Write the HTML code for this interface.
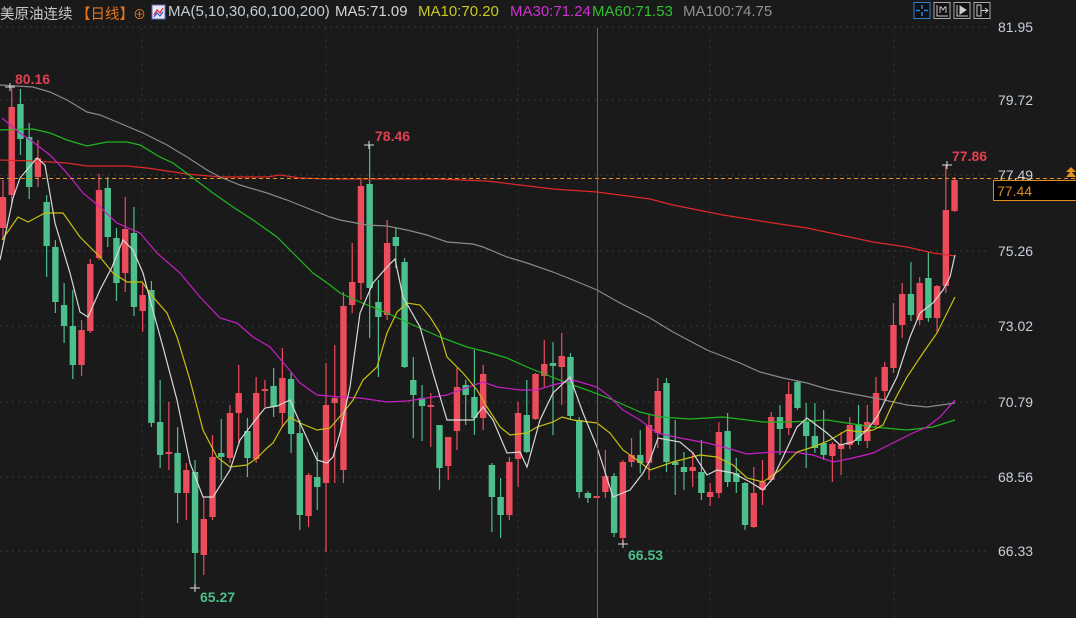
<!DOCTYPE html>
<html><head><meta charset="utf-8"><style>
html,body{margin:0;padding:0;background:#1a1a1a;width:1076px;height:618px;overflow:hidden}
#hd{position:absolute;left:0;top:3px;height:20px;font:15px "Liberation Sans","Noto Sans CJK SC",sans-serif;white-space:nowrap}
#hd span{position:absolute;top:0}
svg{position:absolute;left:0;top:0}
</style></head><body>
<svg id="s" width="1076" height="618" xmlns="http://www.w3.org/2000/svg"></svg>
<div id="hd">
<span style="left:0;color:#c8c8c8;font-size:14.5px">美原油连续</span>
<span style="left:76px;color:#e8741c;font-size:14.5px">【日线】</span>
<span style="left:133px;color:#e8741c;font-size:13px;top:1px">⊕</span>
<span style="left:168px;color:#c4ccd6">MA(5,10,30,60,100,200)</span>
<span style="left:335px;color:#d4d4d4">MA5:71.09</span>
<span style="left:418px;color:#c8c820">MA10:70.20</span>
<span style="left:510px;color:#d030d0">MA30:71.24</span>
<span style="left:592px;color:#30c030">MA60:71.53</span>
<span style="left:683px;color:#909090">MA100:74.75</span>
</div>
<script>
const S=document.getElementById('s');let h='';
[27,100,175,251,326,402,477,551].forEach(y=>{h+=`<line x1="0" y1="${y}" x2="990" y2="${y}" stroke="#3a3a3a" stroke-dasharray="2,4"/>`});
[142,326,518,710,894].forEach(x=>{h+=`<line x1="${x}" y1="28" x2="${x}" y2="618" stroke="#333" stroke-dasharray="2,4"/>`});
h+=`<rect x="152" y="5" width="13" height="14" fill="#e8e8f8" stroke="#6070c0"/><polyline points="154,15 157,10 160,13 163,8" fill="none" stroke="#e03030" stroke-width="1.3"/><polyline points="154,17 157,13 160,16 163,12" fill="none" stroke="#3050e0" stroke-width="1.2"/>`;
[[914,'#2a7fd0'],[934,'#aaa'],[954,'#aaa'],[974,'#aaa']].forEach(([x,c],i)=>{h+=`<rect x="${x}" y="2.5" width="16" height="16" fill="#111" stroke="${c}"/>`});
h+=`<g stroke="#2a8ae0" stroke-width="1.5"><line x1="922" y1="5" x2="922" y2="9"/><line x1="922" y1="12" x2="922" y2="16"/><line x1="916" y1="10.5" x2="920" y2="10.5"/><line x1="924" y1="10.5" x2="928" y2="10.5"/></g>`;
h+=`<g stroke="#ccc" fill="none" stroke-width="1"><polyline points="937,5 937,16 948,16"/><path d="M940,13V7h1l2,3 2,-3h1v6"/><polyline points="957,5 957,16 968,16"/><path d="M960,6v8l6,-4z" fill="#ccc"/><rect x="977" y="5" width="4" height="11"/><path d="M981,10.5h7M985,8l3,2.5-3,2.5" /></g>`;
const C=[[197,228,180,240,1],[107,195,87,203,1],[104,139,89,155,0],[137,187,123,199,0],[158,177,140,187,1],[202,246,195,277,0],[247,302,240,313,0],[305,326,283,343,0],[326,365,290,379,0],[330,365,320,376,1],[264,331,259,333,1],[190,258,174,260,1],[188,237,177,247,0],[238,283,228,301,0],[229,273,197,292,1],[233,307,207,316,0],[295,311,283,332,1],[290,423,281,427,0],[422,455,380,468,0],[452,454,402,470,1],[453,493,427,523,0],[470,493,463,520,1],[472,553,460,588,0],[519,555,497,575,1],[457,517,435,520,1],[453,457,419,480,0],[413,458,405,463,1],[393,413,365,443,1],[431,458,418,477,0],[393,459,377,463,1],[389,391,380,407,1],[386,407,368,417,0],[378,413,348,427,1],[379,434,372,453,0],[433,515,420,530,0],[475,516,473,527,1],[477,487,452,510,0],[405,483,363,552,1],[398,403,345,483,1],[306,470,292,483,1],[282,305,243,313,1],[186,283,180,300,1],[184,288,145,338,0],[302,317,280,377,0],[243,315,220,320,1],[237,246,227,268,0],[262,367,258,368,0],[380,395,357,438,0],[398,406,385,441,0],[405,407,393,447,1],[425,468,425,490,0],[437,466,437,480,1],[387,431,368,450,1],[385,395,380,425,0],[397,418,350,435,0],[374,418,365,430,1],[465,497,463,532,0],[497,515,478,538,0],[462,515,457,520,1],[413,459,402,487,1],[415,452,380,453,0],[374,419,373,420,1],[364,376,340,387,1],[363,366,342,435,0],[356,367,333,405,1],[357,416,353,420,0],[420,492,417,498,0],[493,498,491,503,0],[496,498,496,498,1],[476,492,450,498,1],[476,533,473,537,0],[462,538,460,543,1],[455,462,438,467,1],[455,463,430,473,0],[425,463,415,480,1],[391,433,378,448,1],[383,462,378,472,0],[462,465,420,495,0],[467,472,452,490,0],[467,471,452,487,1],[472,493,440,500,0],[492,497,483,506,1],[432,493,422,498,1],[431,482,413,487,0],[473,482,458,493,0],[483,525,482,530,0],[493,527,467,528,1],[482,490,460,505,1],[417,480,412,482,1],[417,429,405,455,0],[394,428,382,435,1],[382,408,380,410,0],[422,436,403,468,0],[436,448,403,453,0],[443,455,410,460,0],[444,456,442,482,1],[445,449,432,475,1],[425,445,417,449,1],[424,441,405,445,0],[422,441,405,448,1],[393,425,377,427,1],[367,391,362,400,1],[325,368,303,373,1],[294,325,283,338,1],[294,315,262,321,0],[283,320,277,325,1],[278,318,252,322,0],[286,318,285,333,1],[210,286,165,293,1],[180,211,177,212,1]];
C.forEach((c,i)=>{const x=3+i*8.73;const col=c[4]?'#ec4c5c':'#4dbf8c';h+=`<line x1="${x}" y1="${c[2]}" x2="${x}" y2="${c[3]}" stroke="${col}" stroke-width="1.2"/><rect x="${x-3.2}" y="${c[0]}" width="6.4" height="${Math.max(1.5,c[1]-c[0])}" fill="${col}"/>`});
function pl(p,c){h+=`<polyline points="${p}" fill="none" stroke="${c}" stroke-width="1.2"/>`}
pl("0,160 33,161 67,163 87,166 127,166 147,168 167,171 187,174 220,177 267,177 280,175 300,178 330,179 370,179 437,179 487,181 520,185 553,189 597,192 650,199 673,205 723,215 773,223 807,228 840,235 873,242 907,247 933,253 955,256","#e02828");
pl("0,85 33,87 50,92 67,100 87,112 100,115 117,122 143,133 167,145 187,157 207,170 220,177 240,185 267,193 287,200 307,208 330,217 340,220 367,225 387,226 407,230 427,235 447,242 473,244 483,247 507,257 527,263 553,272 573,280 597,290 620,303 650,318 673,332 707,350 740,363 760,372 783,378 807,383 827,389 853,394 880,399 907,405 927,407 955,403","#8a8a8a");
pl("0,130 33,129 50,133 67,140 87,146 107,142 127,142 140,145 160,157 173,163 193,178 213,193 233,207 253,220 277,237 293,253 313,273 330,285 340,293 360,302 387,313 413,325 440,337 467,347 487,352 507,358 527,367 547,375 567,383 587,390 613,400 640,412 660,417 690,419 723,417 763,422 790,422 827,420 873,427 907,430 933,427 955,420","#1fb81f");
pl("2,118 20,133 33,142 50,155 67,173 83,193 100,207 117,223 140,233 157,253 180,273 200,297 220,318 237,323 253,337 270,347 287,367 300,383 317,395 340,397 360,398 387,402 407,401 427,398 447,395 460,390 483,382 497,387 520,390 537,390 553,385 573,380 597,387 610,397 623,410 640,420 657,433 680,438 707,443 727,448 747,454 773,452 793,452 813,455 833,462 853,458 873,453 893,443 913,433 927,427 940,417 955,400","#c81ec8");
pl("2,240 18,217 28,222 45,213 63,213 80,237 100,257 113,273 127,282 142,282 153,297 167,313 177,337 190,380 203,430 217,457 230,467 247,465 257,458 267,448 273,443 282,427 290,417 300,423 317,430 330,428 343,413 353,400 363,380 377,367 387,333 397,312 407,303 420,305 430,317 440,333 447,357 463,373 477,390 487,407 500,427 510,435 527,433 537,427 553,422 562,417 573,420 597,423 610,433 623,450 637,460 650,470 673,462 700,455 717,457 733,465 747,478 763,482 780,470 797,452 813,447 830,440 847,430 860,432 873,430 883,425 893,403 907,377 923,353 937,333 947,313 955,297","#c8c010");
pl("0,260 13,198 20,178 37,158 45,165 55,223 70,273 80,312 88,317 100,290 112,267 123,240 133,250 143,273 152,307 163,347 177,400 190,463 203,497 213,497 230,470 240,440 253,423 265,408 277,406 290,400 300,423 317,460 327,463 333,457 340,433 350,387 360,313 373,283 387,267 395,259 403,297 420,327 433,373 447,420 460,420 473,420 483,407 493,420 507,453 520,452 527,467 540,420 553,393 570,377 583,413 597,447 613,497 630,490 643,473 650,460 658,438 680,442 693,453 707,475 717,470 733,473 750,482 763,490 773,478 783,457 797,427 807,418 827,433 840,445 853,442 867,430 877,417 887,397 897,377 910,337 920,313 933,303 943,290 950,277 955,255","#d8d8d8");
h+=`<line x1="0" y1="178.5" x2="1076" y2="178.5" stroke="#e89020" stroke-dasharray="4,3"/>`;
h+=`<line x1="597.5" y1="28" x2="597.5" y2="618" stroke="#666"/>`;
const L=[[27,'81.95'],[100,'79.72'],[175,'77.49'],[251,'75.26'],[326,'73.02'],[402,'70.79'],[477,'68.56'],[551,'66.33']];
L.forEach(([y,t])=>{h+=`<text x="998" y="${y+5}" fill="#c8d0dc" font-family="Liberation Sans" font-size="14">${t}</text>`});
h+=`<rect x="993.5" y="180.5" width="84" height="20" fill="#000" stroke="#e08a20"/><text x="997" y="196" fill="#e08a20" font-family="Liberation Sans" font-size="14">77.44</text>`;
h+=`<path d="M1066,177l5,-6 5,6z M1066,172l5,-5 5,5z" fill="#e89020"/>`;
function lab(x,y,t,c){h+=`<text x="${x}" y="${y}" fill="${c}" font-family="Liberation Sans" font-size="14" font-weight="bold">${t}</text>`}
function crs(x,y){h+=`<path d="M${x-5},${y}h10M${x},${y-4}v8" stroke="#ddd"/>`}
crs(10,87);lab(15,84,'80.16','#e04050');
crs(369,145);lab(375,141,'78.46','#e04050');
crs(947,165);lab(952,161,'77.86','#e04050');
crs(195,588);lab(200,602,'65.27','#4dbf8c');
crs(623,544);lab(628,560,'66.53','#4dbf8c');
S.innerHTML=h;
</script>
</body></html>
